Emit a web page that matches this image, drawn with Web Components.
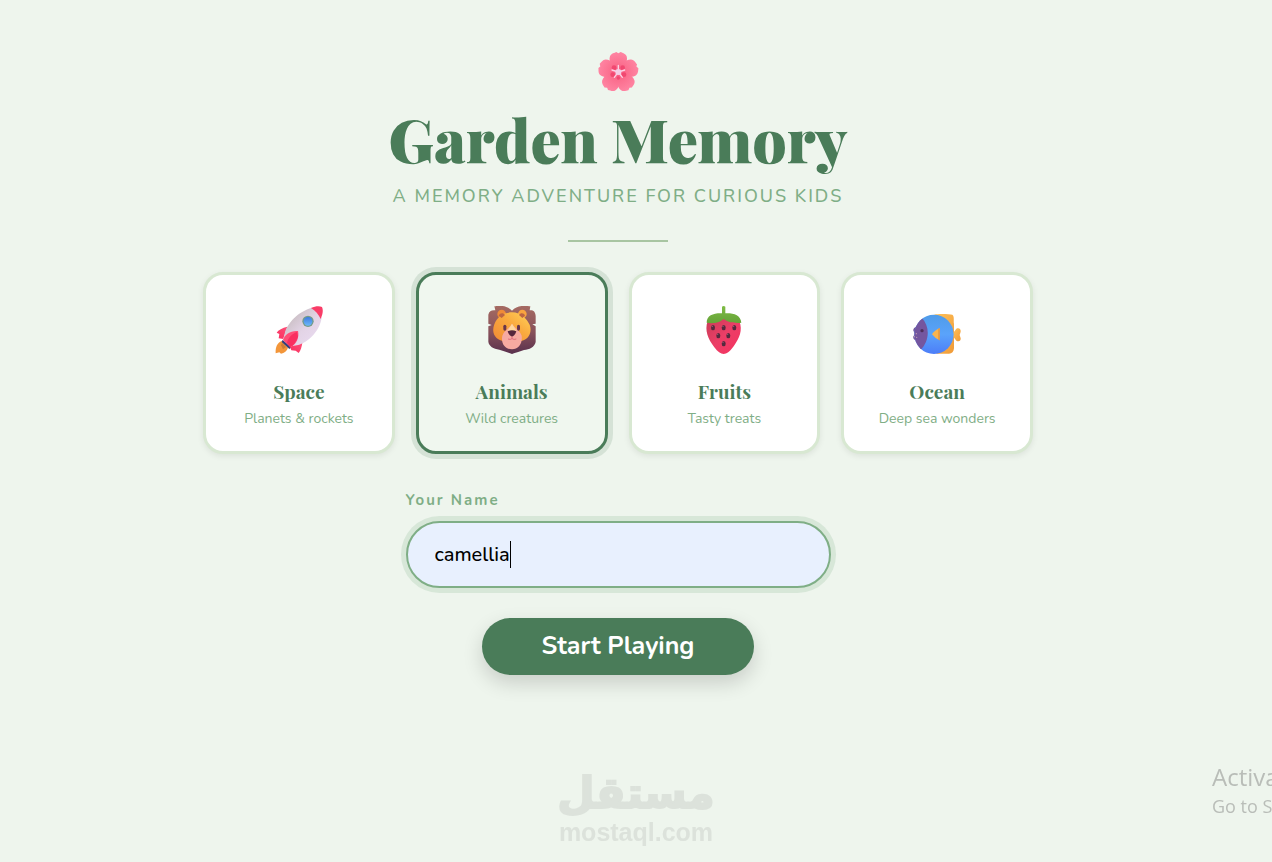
<!DOCTYPE html>
<html lang="en">
<head>
<meta charset="utf-8">
<meta name="viewport" content="width=device-width, initial-scale=1">
<title>Garden Memory</title>
<style>
    :root {
        --green: #4a7c59;
        --sage: #7fae86;
        --mist: #d8e8d2;
        --page: #eef5ed;
        --serif: "Playfair Display", "Liberation Serif", serif;
        --sans: Nunito, Lato, sans-serif;
    }
    body {
        margin: 0;
        min-height: 100vh;
        background: var(--page);
        font-family: var(--sans);
    }
</style>
</head>
<body>
<garden-app></garden-app>

<script>
(function(){

// All theme pictures, each on its own square viewBox
var icons = {
flower: /*html*/`
<svg viewBox="27 27 126 126" aria-hidden="true">
  <defs><radialGradient id="p" cx="91" cy="90" r="62" gradientUnits="userSpaceOnUse">
    <stop offset="0" stop-color="#f8577f"/><stop offset=".4" stop-color="#fb6f8f"/><stop offset="1" stop-color="#ff86a4"/>
  </radialGradient></defs>
  <g fill="url(#p)">
    <path id="petal" d="M91 94C74 80 60 59 66 43C70 33 80 33 85 30L91 34L98 30C104 33 112 34 116 43C121 59 108 80 91 94Z"/>
    <use href="#petal" transform="rotate(72 91 91)"/>
    <use href="#petal" transform="rotate(144 91 91)"/>
    <use href="#petal" transform="rotate(216 91 91)"/>
    <use href="#petal" transform="rotate(288 91 91)"/>
  </g>
  <g fill="#ee3d68" opacity=".75">
    <circle cx="78" cy="77" r="7"/><circle cx="104" cy="77" r="7"/><circle cx="74" cy="98" r="7"/>
    <circle cx="108" cy="98" r="7"/><circle cx="91" cy="108" r="5"/>
  </g>
  <g stroke="#fbd3e4" stroke-width="4" stroke-linecap="round">
    <path d="M91 90V70M91 90L72 84M91 90L110 84M91 90L79 106M91 90L103 106"/>
  </g>
  <circle cx="91" cy="90" r="9" fill="#f3cfe6"/>
</svg>`,
space: /*html*/`
<svg viewBox="33 30 144 144" aria-hidden="true">
  <defs>
    <linearGradient id="b" x1="0" y1="0" x2="1" y2="1"><stop offset=".2" stop-color="#c9bec3"/><stop offset=".55" stop-color="#e3d4e6"/><stop offset="1" stop-color="#eadcf3"/></linearGradient>
    <linearGradient id="f" x1="1" y1="0" x2="0" y2="1"><stop offset="0" stop-color="#ff4f78"/><stop offset="1" stop-color="#f92f60"/></linearGradient>
    <linearGradient id="w" x1="0" y1="0" x2="0" y2="1"><stop offset="0" stop-color="#3f7be0"/><stop offset="1" stop-color="#6cb8f8"/></linearGradient>
  </defs>
  <path d="M53 135C40 140 34 152 35 172L46 169L51 173C61 171 69 165 72 155Z" fill="#f3963a"/>
  <path d="M54 141L66 153L57 160L51 148Z" fill="#cf7c35"/>
  <path d="M56 131L82 154L76 159L53 138Z" fill="#35407c"/>
  <path d="M70 92C55 95 43 102 38 110L46 114L44 127L58 129Z" fill="url(#f)"/>
  <path d="M116 136C113 153 110 165 104 171L95 164L82 163L78 153Z" fill="url(#f)"/>
  <path d="M62 113C69 82 103 46 144 35L173 65C168 101 136 139 99 148L79 151L57 132Z" fill="url(#b)"/>
  <path d="M141 36C154 30 166 29 174 33C178 42 177 53 170 69C164 55 154 44 141 36Z" fill="#f93c67"/>
  <path d="M57 132C63 114 80 103 102 105C106 124 99 144 79 154Z" fill="#ff4e77"/>
  <path d="M69 140C73 125 84 113 99 108L102 122C96 138 89 147 79 154Z" fill="#f92f60"/>
  <circle cx="132" cy="76" r="17" fill="#739b8a"/>
  <circle cx="132" cy="76" r="13" fill="url(#w)"/>
</svg>`,
animals: /*html*/`
<svg viewBox="35 30 144 144" aria-hidden="true">
  <defs>
    <linearGradient id="m" x1="0" y1="0" x2="0" y2="1"><stop offset="0" stop-color="#a56b62"/><stop offset=".55" stop-color="#87515a"/><stop offset="1" stop-color="#59304d"/></linearGradient>
    <linearGradient id="h" x1="0" y1="1" x2="1" y2="0"><stop offset="0" stop-color="#f18a35"/><stop offset=".55" stop-color="#f9a93e"/><stop offset="1" stop-color="#ffd35a"/></linearGradient>
  </defs>
  <path d="M54 31C70 28 92 28 107 44C121 28 144 28 162 31L160 43C171 42 177 47 178 60V83L168 85L178 91V138C175 153 159 161 143 162C127 168 118 170 107 174C95 169 83 165 69 161C51 158 38 151 36 137V91L46 87L36 83V56C39 45 45 42 57 43Z" fill="url(#m)"/>
  <circle cx="76" cy="54" r="13" fill="#ef8b38"/><circle cx="138" cy="54" r="13" fill="#f9a43f"/>
  <path d="M107 49C135 49 151 69 160 86C170 113 151 137 127 136L107 130L87 136C60 134 43 114 54 85C63 61 83 49 107 49Z" fill="url(#h)"/>
  <path d="M67 59C72 49 81 50 86 57L76 66ZM128 57C133 49 143 51 146 59L138 66Z" fill="#bd6542"/>
  <path d="M107 83C116 97 132 104 136 119C139 144 126 159 107 160C87 159 73 144 78 119C83 104 98 99 107 83Z" fill="#f7aaa1"/>
  <path d="M107 83L120 104L107 112L94 104Z" fill="#ffd79c"/>
  <rect x="81" y="86" width="9" height="18" rx="5" fill="#67344a"/><rect x="122" y="86" width="9" height="18" rx="5" fill="#67344a"/>
  <path d="M94 106C102 102 112 102 120 106C117 116 112 120 107 122C102 120 97 116 94 106Z" fill="#56263c"/>
  <path d="M107 121V129M95 129Q102 132 107 128Q113 132 120 129" fill="none" stroke="#df6d7e" stroke-width="3"/>
</svg>`,
fruits: /*html*/`
<svg viewBox="31 30 144 144" aria-hidden="true">
  <defs>
    <linearGradient id="s" x1="0" y1="0" x2="1" y2="1"><stop offset="0" stop-color="#c83c57"/><stop offset=".5" stop-color="#ec3e67"/><stop offset="1" stop-color="#f6315f"/></linearGradient>
    <linearGradient id="l" x1="0" y1="0" x2="0" y2="1"><stop offset="0" stop-color="#7fbc45"/><stop offset="1" stop-color="#65a338"/></linearGradient>
  </defs>
  <path d="M54 76C64 63 137 63 149 76C160 103 149 128 132 151C119 169 111 174 102 174C93 174 84 168 74 154C55 129 44 103 54 76Z" fill="url(#s)"/>
  <path d="M97 32Q102 28 107 32V52C132 51 153 57 155 80C147 81 139 81 130 79C119 79 112 76 102 69C93 76 86 80 75 81C65 82 57 81 51 80C51 58 72 51 97 52Z" fill="url(#l)"/>
  <g fill="#55293e">
    <ellipse cx="70" cy="95" rx="6" ry="8"/><ellipse cx="102" cy="95" rx="6" ry="8"/><ellipse cx="134" cy="95" rx="6" ry="8"/>
    <ellipse cx="86" cy="119" rx="6" ry="8"/><ellipse cx="116" cy="119" rx="6" ry="8"/><ellipse cx="102" cy="143" rx="6" ry="8"/>
  </g>
  <g fill="#9d6476">
    <circle cx="68" cy="91" r="2"/><circle cx="100" cy="91" r="2"/><circle cx="132" cy="91" r="2"/>
    <circle cx="84" cy="115" r="2"/><circle cx="114" cy="115" r="2"/><circle cx="100" cy="139" r="2"/>
  </g>
</svg>`,
ocean: /*html*/`
<svg viewBox="33 30 144 144" aria-hidden="true">
  <defs>
    <linearGradient id="o" x1="0" y1="0" x2="0" y2="1"><stop offset="0" stop-color="#4f9be8"/><stop offset=".5" stop-color="#5aa3fb"/><stop offset="1" stop-color="#4c7df8"/></linearGradient>
    <linearGradient id="y" x1="0" y1="0" x2="1" y2="1"><stop offset="0" stop-color="#ffc25a"/><stop offset="1" stop-color="#f09a37"/></linearGradient>
    <clipPath id="c"><circle cx="96" cy="115" r="59"/></clipPath>
  </defs>
  <path d="M97 56C107 53 142 54 151 56C158 61 154 73 156 83V157C155 168 149 174 139 173H103Z" fill="url(#y)"/>
  <path d="M153 112L163 98C171 94 177 99 176 107L173 117L176 127C177 136 169 138 163 134L153 121Z" fill="url(#y)"/>
  <path d="M42 93C35 96 32 101 35 106L39 115L34 121C32 128 37 134 45 134Z" fill="#72559b"/>
  <circle cx="96" cy="115" r="59" fill="url(#o)"/>
  <path d="M30 65H59C84 90 84 133 55 163H30Z" fill="#74569f" clip-path="url(#c)"/>
  <circle cx="60" cy="104" r="5" fill="#4d2f5b"/>
  <path d="M113 96Q96 104 90 115Q99 127 113 133Z" fill="#f9b44e"/>
  <path d="M109 98L113 96V133L109 131Z" fill="#e99337"/>
  <g fill="#bda1b3"><circle cx="43" cy="113" r="2"/><circle cx="37" cy="122" r="2"/><circle cx="44" cy="124" r="2"/></g>
</svg>`
};

function makeTemplate(html) {
    var template = document.createElement('template');
    template.innerHTML = html;
    return template;
}

// Attaches an open root with a fresh copy of the template
class BaseElement extends HTMLElement {
    constructor(template) {
        super();
        this.attachShadow({mode:'open'});
        this.shadowRoot.appendChild(template.content.cloneNode(true));
    }
}


var iconTemplate = makeTemplate(/*html*/`
<style>
    :host { display: block; width: 48px; height: 48px; }
    svg { display: block; width: 100%; height: 100%; }
</style>
<span></span>
`);

class GardenIcon extends BaseElement {
    constructor() {
        super(iconTemplate);
    }

    static get observedAttributes() { return ['name']; }

    attributeChangedCallback(attr, old, val) {
        this.shadowRoot.querySelector('span').innerHTML = icons[val] || '';
    }
}
window.customElements.define('garden-icon', GardenIcon);


var headerTemplate = makeTemplate(/*html*/`
<style>
    :host { display: block; text-align: center; }
    header { display: flex; flex-direction: column; align-items: center; }
    garden-icon { width: 42px; height: 42px; }
    h1 {
        margin: 10px 0 11px;
        font: 900 60px/70px var(--serif);
        color: var(--green);
    }
    p {
        margin: 0;
        font-size: 18px;
        font-weight: 500;
        line-height: 24px;
        letter-spacing: 2px;
        text-transform: uppercase;
        color: var(--sage);
    }
    hr {
        width: 100px;
        height: 2px;
        margin: 32px 0 30px;
        border: 0;
        background: #a8c5a2;
    }
</style>
<header>
    <garden-icon name="flower"></garden-icon>
    <h1><slot></slot></h1>
    <p><slot name="tagline"></slot></p>
    <hr>
</header>
`);

class GardenHeader extends BaseElement {
    constructor() {
        super(headerTemplate);
    }
}
window.customElements.define('garden-header', GardenHeader);


var cardTemplate = makeTemplate(/*html*/`
<style>
    :host { display: block; }
    button {
        box-sizing: border-box;
        width: 100%;
        display: flex;
        flex-direction: column;
        align-items: center;
        padding: 31px 12px 22px;
        border: 3px solid var(--mist);
        border-radius: 20px;
        background: white;
        box-shadow: 0 2px 6px rgba(0, 0, 0, .08);
        font-family: inherit;
        cursor: pointer;
    }
    :host([selected]) button {
        border-color: var(--green);
        background: #f0f7ef;
        box-shadow: 0 0 0 5px rgba(74, 124, 89, .15);
    }
    strong {
        margin: 24px 0 5px;
        font: 700 19px/26px var(--serif);
        color: var(--green);
    }
    span {
        font-size: 14px;
        line-height: 20px;
        color: var(--sage);
    }
</style>
<button type="button" aria-pressed="false">
    <garden-icon></garden-icon>
    <strong><slot></slot></strong>
    <span><slot name="note"></slot></span>
</button>
`);

class ThemeCard extends BaseElement {
    constructor() {
        super(cardTemplate);
    }

    static get observedAttributes() { return ['selected']; }

    attributeChangedCallback() {
        this.shadowRoot.querySelector('button').setAttribute('aria-pressed', this.hasAttribute('selected'));
    }

    connectedCallback() {
        this.shadowRoot.querySelector('garden-icon').setAttribute('name', this.getAttribute('icon'));
    }
}
window.customElements.define('theme-card', ThemeCard);


var pickerTemplate = makeTemplate(/*html*/`
<style>
    :host {
        display: grid;
        grid-template-columns: repeat(4, 1fr);
        gap: 21px;
        width: 100%;
        max-width: 830px;
    }
    @media (max-width: 700px) {
        :host { grid-template-columns: repeat(2, 1fr); }
    }
</style>
<slot></slot>
`);

class ThemePicker extends BaseElement {
    constructor() {
        super(pickerTemplate);
        this.addEventListener('click', e => {
            var card = e.target.closest('theme-card');
            if (!card) return;
            this.querySelectorAll('theme-card').forEach(c => c.toggleAttribute('selected', c === card));
        })
    }
}
window.customElements.define('theme-picker', ThemePicker);


var fieldTemplate = makeTemplate(/*html*/`
<style>
    :host { display: block; width: 100%; max-width: 425px; }
    label {
        display: block;
        margin-bottom: 11px;
        font-size: 15px;
        font-weight: 700;
        line-height: 20px;
        letter-spacing: 2px;
        color: var(--sage);
    }
    input {
        box-sizing: border-box;
        display: block;
        width: 100%;
        height: 67px;
        padding: 0 27px;
        border: 2px solid var(--mist);
        border-radius: 34px;
        outline: 0;
        background: #e8f0fe;
        font: 500 20px/26px var(--sans);
        color: black;
        caret-color: transparent;
    }
    /* steady caret, --caret is its distance from the padding edge */
    input:focus {
        border-color: var(--sage);
        background: linear-gradient(black, black) var(--caret) 50% / 1px 27px no-repeat #e8f0fe;
        box-shadow: 0 0 0 5px rgba(127, 174, 134, .2);
    }
</style>
<label for="name"><slot></slot></label>
<input id="name" type="text" autocomplete="name" spellcheck="false">
`);

class NameField extends BaseElement {
    constructor() {
        super(fieldTemplate);
        this.input = this.shadowRoot.querySelector('input');
        this.pen = document.createElement('canvas').getContext('2d');
        for (var type of ['input', 'keyup', 'click']) {
            this.input.addEventListener(type, () => this.moveCaret());
        }
    }

    moveCaret() {
        var style = getComputedStyle(this.input);
        this.pen.font = `${style.fontWeight} ${style.fontSize} ${style.fontFamily}`;
        var before = this.input.value.slice(0, this.input.selectionEnd);
        var x = parseInt(style.paddingLeft) + Math.round(this.pen.measureText(before).width);
        this.input.style.setProperty('--caret', `${x}px`);
    }

    connectedCallback() {
        this.input.value = this.getAttribute('value') || '';
        this.input.focus();
        this.input.setSelectionRange(this.input.value.length, this.input.value.length);
        this.moveCaret();
    }
}
window.customElements.define('name-field', NameField);


var startTemplate = makeTemplate(/*html*/`
<style>
    :host { display: block; }
    button {
        padding: 12px 60px 13px;
        border: 0;
        border-radius: 30px;
        background: var(--green);
        box-shadow: 0 8px 20px rgba(0, 0, 0, .16);
        font: 700 25px/32px var(--sans);
        color: white;
        cursor: pointer;
    }
</style>
<button type="button"><slot></slot></button>
`);

class StartButton extends BaseElement {
    constructor() {
        super(startTemplate);
    }
}
window.customElements.define('start-button', StartButton);


var markTemplate = makeTemplate(/*html*/`
<style>
    :host {
        position: fixed;
        left: 0;
        right: 0;
        bottom: 16px;
        text-align: center;
        color: #dce2db;
        pointer-events: none;
    }
    b { display: block; }
    .ar {
        font: 700 43px/50px "DejaVu Sans", sans-serif;
        -webkit-text-stroke: 2px #dce2db;
    }
    .en { font: 700 25px/28px "Liberation Sans", sans-serif; }
</style>
<b class="ar" lang="ar" dir="rtl"><slot name="ar"></slot></b>
<b class="en"><slot></slot></b>
`);

class SiteMark extends BaseElement {
    constructor() {
        super(markTemplate);
    }
}
window.customElements.define('site-mark', SiteMark);


var noticeTemplate = makeTemplate(/*html*/`
<style>
    :host {
        position: fixed;
        right: 0;
        bottom: 44px;
        width: 60px;
        overflow: hidden;
        white-space: nowrap;
        font-family: "Open Sans", sans-serif;
        color: #b9bdb8;
        pointer-events: none;
    }
    div { font-size: 24px; line-height: 34px; }
    small { display: block; font-size: 18px; line-height: 24px; }
</style>
<div><slot></slot></div>
<small><slot name="more"></slot></small>
`);

class SystemNotice extends BaseElement {
    constructor() {
        super(noticeTemplate);
    }
}
window.customElements.define('system-notice', SystemNotice);


var appTemplate = makeTemplate(/*html*/`
<style>
    :host { display: block; }
    main {
        display: flex;
        flex-direction: column;
        align-items: center;
        padding: 51px 36px 24px 0;
    }
    name-field { margin: 36px 0 30px; }
</style>
<main>
    <garden-header>Garden Memory<span slot="tagline">A memory adventure for curious kids</span></garden-header>
    <theme-picker>
        <theme-card icon="space">Space<span slot="note">Planets &amp; rockets</span></theme-card>
        <theme-card icon="animals" selected>Animals<span slot="note">Wild creatures</span></theme-card>
        <theme-card icon="fruits">Fruits<span slot="note">Tasty treats</span></theme-card>
        <theme-card icon="ocean">Ocean<span slot="note">Deep sea wonders</span></theme-card>
    </theme-picker>
    <name-field value="camellia">Your Name</name-field>
    <start-button>Start Playing</start-button>
</main>
<site-mark><span slot="ar">مستقل</span>mostaql.com</site-mark>
<system-notice>Activa<span slot="more">Go to S</span></system-notice>
`);

class GardenApp extends BaseElement {
    constructor() {
        super(appTemplate);
    }
}
window.customElements.define('garden-app', GardenApp);

})();
</script>
</body>
</html>
